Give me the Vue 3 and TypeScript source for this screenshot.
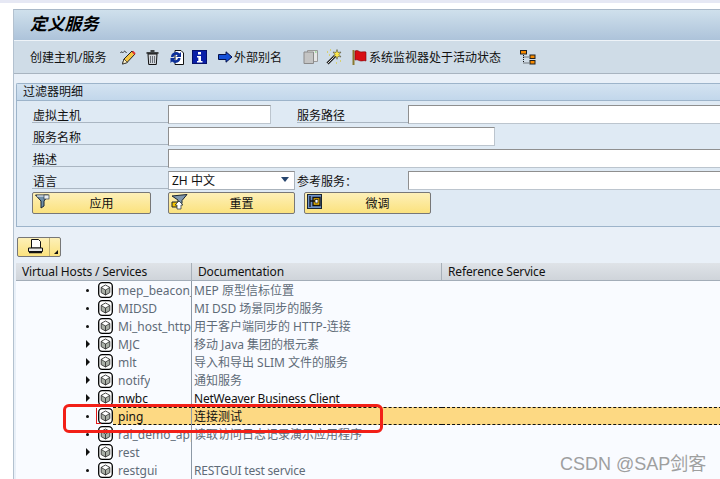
<script setup lang="ts">
interface Row { name: string; doc: string; leaf: boolean; dark?: boolean; sel?: boolean; latin?: boolean }
const rows: Row[] = [
  { name: 'mep_beacon_', doc: 'MEP 原型信标位置', leaf: true },
  { name: 'MIDSD', doc: 'MI DSD 场景同步的服务', leaf: true },
  { name: 'Mi_host_http', doc: '用于客户端同步的 HTTP-连接', leaf: true },
  { name: 'MJC', doc: '移动 Java 集团的根元素', leaf: false },
  { name: 'mlt', doc: '导入和导出 SLIM 文件的服务', leaf: false },
  { name: 'notify', doc: '通知服务', leaf: false },
  { name: 'nwbc', doc: 'NetWeaver Business Client', leaf: false, dark: true, latin: true },
  { name: 'ping', doc: '连接测试', leaf: true, dark: true, sel: true },
  { name: 'ral_demo_app', doc: '读取访问日志记录演示应用程序', leaf: true },
  { name: 'rest', doc: '', leaf: false },
  { name: 'restgui', doc: 'RESTGUI test service', leaf: true, latin: true }
]
</script>

<template>
  <div class="screen">
    <div class="topstripe"></div>
    <main class="win">
      <header class="title"><h1>定义服务</h1></header>
      <nav class="toolbar">
        <span class="tool t1">创建主机/服务</span>
        <svg class="ic i-edit" width="17" height="16" viewBox="0 0 17 16"><path d="M.5 4c1-2.500 2 .5 3-.8s1.500-1.500 3 .8" fill="none" stroke="#222"/><path d="M2.500 15l1.500-5 8-8 3 3-8 8.500z" fill="#f5c542" stroke="#222"/><path d="M12.500 2.500l2.500 2.500" stroke="#d33" stroke-width="2"/><path d="M2.500 15l1.500-5 3.500 3.500z" fill="#fff3c8" stroke="#222" stroke-width=".7"/></svg>
        <svg class="ic i-trash" width="13" height="15" viewBox="0 0 13 15"><path d="M4.500 1h4M.5 3h12" stroke="#111" stroke-width="1.400"/><path d="M2 4h9l-.7 10.500H2.700z" fill="#d3d7dc" stroke="#111"/><path d="M4.500 6v7M6.500 6v7M8.500 6v7" stroke="#6a7078"/></svg>
        <svg class="ic i-ref" width="16" height="15" viewBox="0 0 16 15"><path d="M7 .5h6l2.500 2.500v11.500H7z" fill="#fff" stroke="#111"/><path d="M3 7a5 5 0 0 1 8.500-3.500L13 2v5H8l1.700-1.700A2.600 2.600 0 0 0 5.500 7z" fill="#0b2f9a"/><path d="M12.500 8a5 5 0 0 1-8.500 3.500L2.500 13V8h5L5.800 9.700A2.600 2.600 0 0 0 10 8z" fill="#0b2f9a"/></svg>
        <svg class="ic i-info" width="15" height="14" viewBox="0 0 15 14"><rect x=".5" y=".5" width="14" height="13" fill="#0a1fa8" stroke="#06106a"/><rect x="6" y="2" width="3" height="2.500" fill="#fff"/><path d="M5 6h4v5h1.500v1.500h-5.500V11h1.300V7.500H5z" fill="#fff"/></svg>
        <span class="tool t2"><svg width="15" height="12" viewBox="0 0 15 12"><path d="M.5 3.500h7.500V.8L14 6l-6 5.200V8.500H.5z" fill="#1450d8" stroke="#05104a"/></svg>外部别名</span>
        <svg class="ic i-doc" width="15" height="14" viewBox="0 0 15 14"><path d="M4.500.5h10v11h-10z" fill="#e6e6e6" stroke="#9a9a9a"/><path d="M1 2h9.500v11.500H1z" fill="#c4c4c4" stroke="#8a8a8a"/><path d="M12 2h1.500" stroke="#6c6"/></svg>
        <svg class="ic i-wand" width="16" height="16" viewBox="0 0 16 16"><path d="M1.500 14.500l8-8" stroke="#222" stroke-width="3"/><path d="M1.500 14.500l8-8" stroke="#ddd" stroke-width="1"/><path d="M11 .5l1 3 3-.5-2 2.500 2 2.500-3-.7-1 3-1-3-3 .7 2-2.500-2-2.500 3 .5z" fill="#ffe94a" stroke="#333" stroke-width=".5"/><path d="M1 3h1M4 1h1M14 12h1M10 14h1M3 6h1" stroke="#e0c400" stroke-width="1.200"/></svg>
        <span class="tool t3"><svg width="15" height="16" viewBox="0 0 15 16"><path d="M1.500 1v15" stroke="#8a7a30" stroke-width="2"/><path d="M3 2c3-1.500 4 1 6 1s3-.5 5 0v9c-2-.8-3 0-5 0s-3-2-6-1z" fill="#d80e14" stroke="#7a0508" stroke-width=".6"/></svg>系统监视器处于活动状态</span>
        <svg class="ic i-tree" width="16" height="15" viewBox="0 0 16 15"><path d="M3.500 5v8h6M3.500 7h6" fill="none" stroke="#111" stroke-dasharray="1 1"/><rect x=".5" y=".5" width="6" height="3.500" fill="#f78a00" stroke="#222"/><rect x="10" y="5" width="5" height="3.500" fill="#f78a00" stroke="#222"/><rect x="10" y="10.500" width="5" height="3.500" fill="#f78a00" stroke="#222"/></svg>
      </nav>

      <section class="group">
        <h2 class="grouphead">过滤器明细</h2>
        <div class="form">
          <div class="frow">
            <label class="lab">虚拟主机</label><input class="inp w103" />
            <label class="lab lab2">服务路径</label><input class="inp wfar" />
          </div>
          <div class="frow">
            <label class="lab">服务名称</label><input class="inp w327" />
          </div>
          <div class="frow">
            <label class="lab">描述</label><input class="inp wmax" />
          </div>
          <div class="frow">
            <label class="lab">语言</label>
            <div class="select"><span>ZH 中文</span><i class="caret"></i></div>
            <span class="lab3">参考服务：</span><input class="inp wfar" />
          </div>
          <div class="btns">
            <button class="btn b1">
              <svg width="15" height="15" viewBox="0 0 15 15"><path d="M.5 1h13L9 7v5l-3 2V7z" fill="#6f8fa8" stroke="#1a2530"/><path d="M2 2h10" stroke="#fff"/><rect x="9" y="1" width="5" height="4" fill="#e8eef2" stroke="#1a2530" stroke-width=".6"/></svg>
              <span>应用</span>
            </button>
            <button class="btn b2">
              <svg width="17" height="16" viewBox="0 0 17 16"><path d="M1 2l15-1.500-5 6v3l-4 1V6z" fill="#7f97ad" stroke="#1a2530"/><path d="M1 8h8v5H1z" fill="#f5c400" stroke="#1a2530"/><path d="M6 15V11H4l4-4 4 4h-2v4z" fill="#fff" stroke="#1a2530" stroke-width=".7"/></svg>
              <span>重置</span>
            </button>
            <button class="btn b3">
              <svg width="15" height="15" viewBox="0 0 15 15"><rect x=".5" y=".5" width="14" height="14" fill="#6f93c9" stroke="#1a2530"/><path d="M3 2v11M3 7h8M6 3.500h7v8H6z" fill="#f2b800" stroke="#111" stroke-width="1.300"/><rect x="8" y="5.500" width="3" height="3.500" fill="#fff" stroke="#111" stroke-width=".7"/></svg>
              <span>微调</span>
            </button>
          </div>
        </div>
      </section>

      <div class="printbar">
        <button class="printbtn">
          <span class="pmain"><svg width="15" height="15" viewBox="0 0 15 15"><path d="M3.500.5h7l2 2V9h-9z" fill="#fff" stroke="#111"/><path d="M.5 9h14v3.500H.5z" fill="#e8e8e8" stroke="#111"/><path d="M1 13.500h13" stroke="#111" stroke-width="1.500"/></svg></span>
          <span class="parrow"><i></i></span>
        </button>
      </div>

      <div class="table">
        <div class="thead">
          <div class="th c1">Virtual Hosts / Services</div>
          <div class="th c2">Documentation</div>
          <div class="th c3">Reference Service</div>
        </div>
        <div v-for="r in rows" :key="r.name" class="tr" :class="{ dark: r.dark, sel: r.sel }">
          <div class="td c1">
            <i :class="r.leaf ? 'dot' : 'tri'"></i>
            <span class="cubewrap" :class="{ focus: r.sel }">
              <svg class="cube" width="15" height="16" viewBox="0 0 15 16"><rect x=".7" y=".7" width="13.600" height="14.600" rx="3.500" fill="#fff" stroke="#000" stroke-width="1.300"/><path d="M7.500 3l4.300 2.400v5.200L7.500 13l-4.300-2.400V5.400z" fill="#a9afa6" stroke="#333" stroke-width=".9"/><path d="M3.200 5.400l4.300 2.500 4.300-2.500M7.500 7.900V13" fill="none" stroke="#333" stroke-width=".9"/><path d="M7.500 3.600l3.400 1.900-3.400 2-3.400-2z" fill="#fff"/></svg>
            </span>
            <span class="name">{{ r.name }}</span>
          </div>
          <div class="td c2" :class="{ latin: r.latin }">{{ r.doc }}</div>
          <div class="td c3"></div>
        </div>
      </div>
    </main>
    <div class="redbox"></div>
    <div class="mark">CSDN @SAP剑客</div>
  </div>
</template>

<style>
html, body { margin: 0; background: #fff; }
</style>

<style scoped>
.screen { position: relative; width: 720px; height: 479px; overflow: hidden; background: #fff; font: 12px "Noto Sans", "Noto Sans CJK SC", sans-serif; color: #111; }
.topstripe { height: 3px; background: #e6e8f4; margin-bottom: 6px; }
.win { margin-left: 13px; width: 720px; height: 470px; background: #e9f0f8; border-top: 1px solid #a9b8c8; border-left: 1px solid #b3c1cf; box-sizing: border-box; }
.title { background: linear-gradient(#cfe0ec, #adc3da); padding: 0 0 6px 16px; display: flex; align-items: center; border-bottom: 1px solid #eef3f8; box-sizing: content-box; height: 24px; }
.title h1 { margin: 0; font-size: 17px; font-style: italic; font-weight: 700; letter-spacing: .2px; color: #000; }
.toolbar { height: 32px; background: #cfdce7; border-bottom: 1px solid #a8b4c0; display: flex; align-items: center; padding-left: 16px; }
.tool { display: inline-flex; align-items: center; white-space: nowrap; font-size: 12px; color: #111; }
.ic { flex: none; }
.t1 { width: 90px; }
.i-edit { margin-left: 0; }
.i-trash { margin-left: 9px; }
.i-ref { margin-left: 9px; }
.i-info { margin-left: 8px; }
.t2 { margin-left: 11px; width: 66px; }
.t2 svg { margin-right: 1px; }
.i-doc { margin-left: 19px; }
.i-wand { margin-left: 8px; }
.t3 { margin-left: 10px; }
.t3 svg { margin-right: 2px; }
.i-tree { margin-left: 19px; }

.group { margin: 9px 0 0 2px; width: 720px; height: 144px; background: #dfeaf4; border: 1px solid #9db4ca; border-right: 0; box-sizing: border-box; border-radius: 2px 0 0 0; }
.grouphead { margin: 0; height: 16px; line-height: 15px; font-size: 12px; font-weight: 400; padding-left: 6px; background: linear-gradient(#d4e3f1, #c2d7eb); border-bottom: 1px solid #9db4ca; box-sizing: content-box; }
.form { padding: 4px 0 0 15px; }
.frow { display: flex; height: 22px; align-items: flex-start; }
.lab { width: 136px; height: 18px; line-height: 21px; padding-left: 1px; box-sizing: border-box; border-bottom: 1px solid #aab6c2; flex: none; }
.lab2 { width: 111px; margin-left: 26px; padding-left: 0; }
.lab3 { width: 111px; margin-left: 2px; line-height: 21px; flex: none; }
.inp { display: block; height: 19px; box-sizing: border-box; background: #fff; border: 1px solid #bcc5ce; border-top-color: #8f8f8f; border-left-color: #8f8f8f; outline: 0; padding: 0; flex: none; }
.w103 { width: 103px; }
.w327 { width: 327px; }
.wmax { width: 560px; }
.wfar { width: 320px; }
.select { width: 127px; height: 19px; box-sizing: border-box; background: #fff; border: 1px solid #aab3bc; border-top-color: #8f8f8f; display: flex; align-items: center; justify-content: space-between; padding: 0 4px 2px 3px; flex: none; }
.caret { width: 0; height: 0; border: 4px solid transparent; border-top: 5px solid #26456e; border-bottom: 0; margin-right: 1px; }
.btns { display: flex; margin-top: -1px; }
.btn { position: relative; height: 22px; padding: 0 0 0 20px; box-sizing: border-box; display: flex; align-items: center; justify-content: center; background: linear-gradient(#fdf0b8, #fbe27e); border: 1px solid #777; border-radius: 2px; font: inherit; color: #111; flex: none; }
.btn svg { position: absolute; left: 2px; top: 1px; }
.b1 { width: 119px; }
.b2 { width: 127px; margin-left: 17px; }
.b3 { width: 127px; margin-left: 9px; }

.printbar { padding: 10px 0 6px 3px; height: 20px; box-sizing: content-box; }
.printbtn { width: 44px; height: 20px; padding: 0; display: flex; background: linear-gradient(#fdf0b8, #fbe27e); border: 1px solid #777; border-radius: 2px; box-sizing: border-box; }
.pmain { width: 31px; height: 18px; padding: 1px 0 0 4px; box-sizing: border-box; }
.parrow { flex: 1; border-left: 1px solid #c0b070; position: relative; height: 18px; }
.parrow i { position: absolute; right: 2px; bottom: 2px; width: 0; height: 0; border-left: 4px solid transparent; border-bottom: 4px solid #111; }

.table { margin-left: 2px; }
.thead { display: flex; height: 18px; background: linear-gradient(#dfe3e8, #cfd4da); border-bottom: 1px solid #a3adb8; box-sizing: border-box; }
.th { line-height: 17px; border-right: 1px solid #a8b0b9; box-sizing: border-box; white-space: nowrap; color: #111; letter-spacing: -.14px; }
.thead .c1 { padding-left: 6px; }
.thead .c2 { padding-left: 6px; }
.thead .c3 { padding-left: 6px; border-right: 0; }
.c1 { width: 176px; flex: none; }
.c2 { width: 250px; flex: none; }
.c3 { width: 280px; flex: none; }
.tr { display: flex; height: 18px; background: #f9fbff; color: #5f6b78; box-sizing: border-box; }
.tr.dark { color: #111; }
.td { height: 18px; line-height: 20px; white-space: nowrap; overflow: hidden; box-sizing: border-box; }
.latin { letter-spacing: -.2px; }
.tr .c1 { display: flex; align-items: center; border-right: 1px solid #8d99a6; padding-left: 68px; }
.tr .c2 { padding-left: 2px; }
.tr.sel .c2, .tr.sel .c3 { background: #fdd983; border-top: 1px dashed #111; border-bottom: 1px dashed #111; line-height: 18px; }
.tr.sel .name { flex: 1; height: 18px; line-height: 18px; background: #fdd983; border-top: 1px dashed #111; border-bottom: 1px dashed #111; box-sizing: border-box; margin-right: -1px; padding-left: 5px; margin-left: 0; }
.dot { width: 3px; height: 3px; border-radius: 50%; background: #111; margin: 0 9px 0 2px; flex: none; }
.tri { width: 0; height: 0; border-left: 4px solid #111; border-top: 4px solid transparent; border-bottom: 4px solid transparent; margin: 0 8px 0 2px; flex: none; }
.cubewrap { position: relative; display: flex; flex: none; height: 16px; }
.cubewrap.focus::before { content: ""; position: absolute; left: -2px; top: 0; width: 4px; height: 15px; border-left: 1px solid #e01818; border-bottom: 1px solid #e01818; }
.name { margin-left: 5px; overflow: hidden; align-self: stretch; line-height: 20px; }
.redbox { position: absolute; left: 63px; top: 404px; width: 320px; height: 29px; box-sizing: border-box; border: 3px solid #f21f17; border-radius: 6px; }
.mark { position: absolute; left: 560px; top: 449px; font: 18px "Liberation Sans", "Noto Sans CJK SC", sans-serif; color: #8f8f8f; opacity: .85; white-space: nowrap; }
</style>
